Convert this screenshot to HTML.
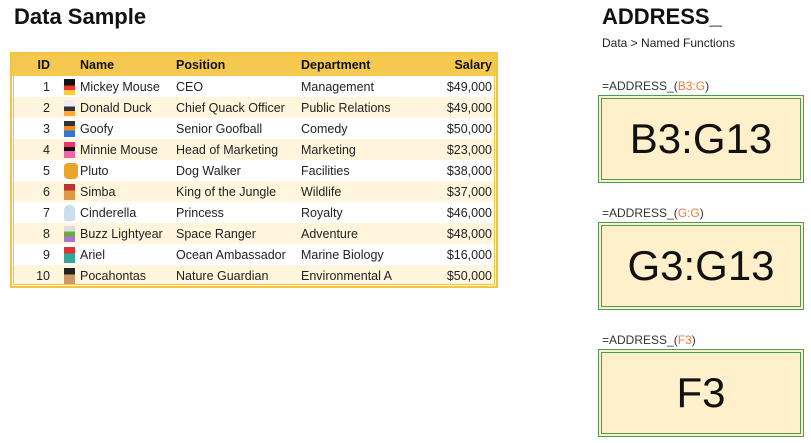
<!DOCTYPE html>
<html><head><meta charset="utf-8"><style>
body{margin:0;width:811px;height:443px;background:#fff;font-family:"Liberation Sans",sans-serif;position:relative;overflow:hidden;color:#222}
h1{position:absolute;margin:0;font-size:22px;font-weight:bold;color:#111}
.tbl{position:absolute;left:10px;top:52px;width:484px;border:2px solid #f5c542;outline:1px solid #f5c542;outline-offset:-4px}
table{border-collapse:collapse;width:100%;font-size:12.5px;table-layout:fixed}
th{background:#f5c94f;height:22px;text-align:left;font-weight:bold;color:#111;padding:0 4px}
td{height:21px;padding:0 4px;white-space:nowrap;color:#222;overflow:hidden}
tr:nth-child(odd) td{background:#fff6dd}
.r{text-align:right}
.ic{display:inline-block;width:11px;height:16px;vertical-align:-4px;margin-right:5px;margin-left:4px}
.lbl{position:absolute;left:602px;font-size:12px;color:#333}
.lbl span{color:#f07a3a}
.box{position:absolute;left:598px;width:198px;height:80px;border:4px double #4d9a52;background:#fff0cc;font-size:42px;text-align:center;line-height:80px;color:#111}
</style></head><body>
<h1 style="left:14px;top:4px">Data Sample</h1>
<h1 style="left:602px;top:4px">ADDRESS_</h1>
<div style="position:absolute;left:602px;top:36px;font-size:12px;color:#222">Data &gt; Named Functions</div>
<div class="tbl"><table>
<colgroup><col style="width:44px"><col style="width:116px"><col style="width:125px"><col style="width:110px"><col></colgroup>
<tr><th style="text-align:right;padding-right:6px">ID</th><th style="padding-left:24px">Name</th><th>Position</th><th>Department</th><th class="r">Salary</th></tr>
<tr><td class="r" style="padding-right:6px">1</td><td><i class="ic" style="background:linear-gradient(#111 40%,#e33 40%,#e33 70%,#fc3 70%)"></i>Mickey Mouse</td><td>CEO</td><td>Management</td><td class="r">$49,000</td></tr>
<tr><td class="r" style="padding-right:6px">2</td><td><i class="ic" style="background:linear-gradient(#eee 40%,#334 40%,#334 70%,#fa3 70%)"></i>Donald Duck</td><td>Chief Quack Officer</td><td>Public Relations</td><td class="r">$49,000</td></tr>
<tr><td class="r" style="padding-right:6px">3</td><td><i class="ic" style="background:linear-gradient(#333 30%,#e82 30%,#e82 60%,#37c 60%)"></i>Goofy</td><td>Senior Goofball</td><td>Comedy</td><td class="r">$50,000</td></tr>
<tr><td class="r" style="padding-right:6px">4</td><td><i class="ic" style="background:linear-gradient(#e36 30%,#111 30%,#111 55%,#e6a 55%)"></i>Minnie Mouse</td><td>Head of Marketing</td><td>Marketing</td><td class="r">$23,000</td></tr>
<tr><td class="r" style="padding-right:6px">5</td><td><i class="ic" style="background:#e9a52a;width:14px;margin-right:2px;border-radius:4px"></i>Pluto</td><td>Dog Walker</td><td>Facilities</td><td class="r">$38,000</td></tr>
<tr><td class="r" style="padding-right:6px">6</td><td><i class="ic" style="background:linear-gradient(#b33 40%,#d94 40%)"></i>Simba</td><td>King of the Jungle</td><td>Wildlife</td><td class="r">$37,000</td></tr>
<tr><td class="r" style="padding-right:6px">7</td><td><i class="ic" style="background:#cde;border-radius:5px 5px 2px 2px"></i>Cinderella</td><td>Princess</td><td>Royalty</td><td class="r">$46,000</td></tr>
<tr><td class="r" style="padding-right:6px">8</td><td><i class="ic" style="background:linear-gradient(#ddd 35%,#6a4 35%,#6a4 65%,#a7c 65%)"></i>Buzz Lightyear</td><td>Space Ranger</td><td>Adventure</td><td class="r">$48,000</td></tr>
<tr><td class="r" style="padding-right:6px">9</td><td><i class="ic" style="background:linear-gradient(#d33 40%,#3a9 40%)"></i>Ariel</td><td>Ocean Ambassador</td><td>Marine Biology</td><td class="r">$16,000</td></tr>
<tr><td class="r" style="padding-right:6px">10</td><td><i class="ic" style="background:linear-gradient(#222 40%,#c96 40%)"></i>Pocahontas</td><td>Nature Guardian</td><td>Environmental A</td><td class="r">$50,000</td></tr>
</table></div>
<div class="lbl" style="top:79px">=ADDRESS_(<span>B3:G</span>)</div>
<div class="box" style="top:95px">B3:G13</div>
<div class="lbl" style="top:206px">=ADDRESS_(<span>G:G</span>)</div>
<div class="box" style="top:222px">G3:G13</div>
<div class="lbl" style="top:333px">=ADDRESS_(<span>F3</span>)</div>
<div class="box" style="top:349px">F3</div>
</body></html>
